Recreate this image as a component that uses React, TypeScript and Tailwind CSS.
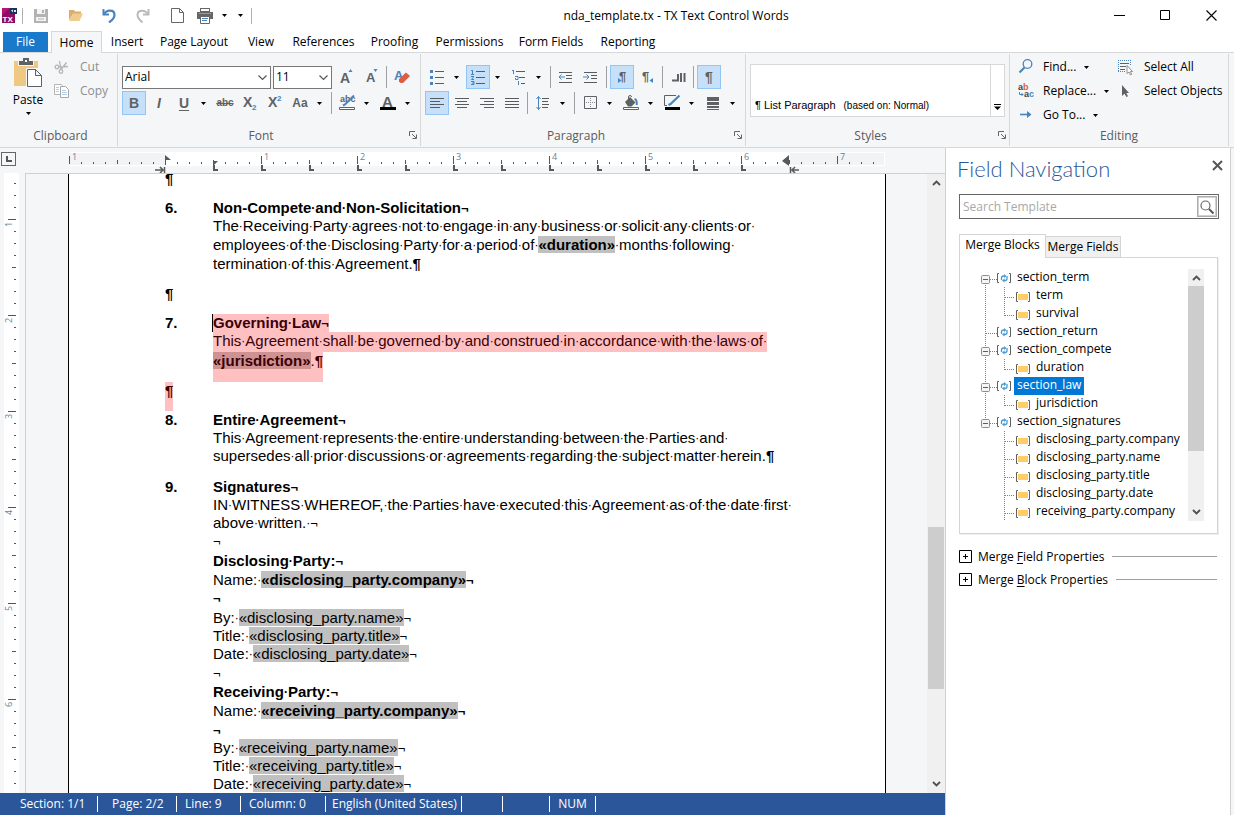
import React from "react";

type Kids = { children?: React.ReactNode };

/* ---------- small shared pieces ---------- */

function Caret() {
  return (
    <svg width="5" height="3" viewBox="0 0 5 3" className="shrink-0" aria-hidden="true">
      <path d="M0 0h5L2.5 3z" fill="#000" />
    </svg>
  );
}

function Icon({ children, size = 24 }: Kids & { size?: number }) {
  return (
    <svg width={size} height={size} viewBox={`0 0 ${size} ${size}`} fill="none" className="shrink-0" aria-hidden="true">
      {children}
    </svg>
  );
}

function Tool({ label, on = false, children }: Kids & { label: string; on?: boolean }) {
  return (
    <button
      aria-label={label}
      className={
        on
          ? "flex h-6 w-6 shrink-0 items-center justify-center bg-[#c5e0f8] outline outline-1 -outline-offset-1 outline-[#92c5f3]"
          : "flex h-6 w-6 shrink-0 items-center justify-center"
      }
    >
      {children}
    </button>
  );
}

function Split({ label, on = false, children }: Kids & { label: string; on?: boolean }) {
  return (
    <div className="mr-0.5 flex shrink-0">
      <Tool label={label} on={on}>
        {children}
      </Tool>
      <button aria-label={`${label} options`} className="flex h-6 w-3.5 items-center justify-center">
        <Caret />
      </button>
    </div>
  );
}

function Sep() {
  return <div className="mx-0.5 h-[22px] w-px shrink-0 bg-[#a0a0a0]" />;
}

function Lines({ rows, color = "#595c5f" }: { rows: number[][]; color?: string }) {
  return (
    <>
      {rows.map(([x, y, w]) => (
        <rect key={`${x}-${y}`} x={x} y={y} width={w} height="1" fill={color} />
      ))}
    </>
  );
}

function Launcher({ label }: { label: string }) {
  return (
    <button aria-label={label} className="absolute right-[3px] bottom-[7px]">
      <svg width="8" height="8" viewBox="0 0 8 8" fill="none" aria-hidden="true">
        <path d="M.5 5V.5H6M3 3l4 4M7.5 3.5v4h-4" stroke="#666" />
      </svg>
    </button>
  );
}

function Group({
  name,
  className,
  labelClass = "",
  launcher = false,
  children,
}: Kids & { name: string; className: string; labelClass?: string; launcher?: boolean }) {
  return (
    <section aria-label={name} className={`relative flex flex-col border-r border-[#d5d7d9] ${className}`}>
      <div className="flex-1">{children}</div>
      <div className={`h-[19px] text-center leading-[18px] text-[#5b5b5b] ${labelClass}`}>{name}</div>
      {launcher && <Launcher label={`${name} settings`} />}
    </section>
  );
}

/* ---------- title bar and tabs ---------- */

function TitleBar() {
  return (
    <header className="flex h-[31px] shrink-0 items-center">
      <div className="flex w-[252px] shrink-0 items-center">
        <svg width="15" height="15" viewBox="0 0 15 15" className="ml-0.5 shrink-0" aria-hidden="true">
          <path d="M0 0h8v6h5v9H0z" fill="#b5127a" />
          <path d="M0 7l8-7v6h5v9H0z" fill="#8c0f60" />
          <path d="M8 0h7v6H8z" fill="#16325c" />
          <path d="M9 2.500l2-1v3zM12 2h2v2h-2z" fill="#dfe8f2" />
          <text x="0.500" y="13.500" fontSize="8" fontWeight="700" fontFamily="Liberation Sans" fill="#fff">TX</text>
        </svg>
        <div className="ml-[5px] h-4 w-px bg-[#b0b0b0]" />
        <button aria-label="Save" className="ml-[11px]">
          <Icon size={14}>
            <path d="M0 0h14v14H0z" fill="#b0b2b4" />
            <path d="M3 0h8v5H3zM2 8h10v4H2z" fill="#f4f4f4" />
            <path d="M8 1h2v3H8zM4 9.500h6v1H4z" fill="#b0b2b4" />
          </Icon>
        </button>
        <button aria-label="Open" className="ml-5">
          <Icon size={15}>
            <path d="M1 2h5l1 1.500h6V6H5l-4 6z" fill="#d9ae6b" />
            <path d="M5 5.500h10L11.500 13H1z" fill="#f0cb8d" />
          </Icon>
        </button>
        <button aria-label="Undo" className="ml-[19px]">
          <Icon size={14}>
            <path d="M1.500 0v5.500H7" stroke="#4a84bd" strokeWidth="2" />
            <path d="M2 5.500C4 .5 12.500 0 12.500 6c0 3-2 5-5.500 7.500" stroke="#4a84bd" strokeWidth="2.200" />
          </Icon>
        </button>
        <button aria-label="Redo" className="ml-5">
          <Icon size={14}>
            <path d="M12.500 0v5.500H7" stroke="#b9bbbd" strokeWidth="2" />
            <path d="M12 5.500C10 .5 1.500 0 1.500 6c0 3 2 5 5 7.500" stroke="#b9bbbd" strokeWidth="2" />
          </Icon>
        </button>
        <button aria-label="New" className="ml-5">
          <Icon size={15}>
            <path d="M1.500.5h8l4 4v10h-12zM9.500.5v4h4" stroke="#666" fill="#fff" />
          </Icon>
        </button>
        <button aria-label="Print" className="ml-3">
          <Icon size={16}>
            <path d="M3 0h10v4H3z" fill="#666" />
            <path d="M4 1h8v2H4z" fill="#fff" />
            <path d="M0 4h16v7H0z" fill="#666" />
            <path d="M2 5h12v1H2z" fill="#9a9c9e" />
            <path d="M3.500 8.500h9v7h-9z" fill="#fff" stroke="#666" />
            <path d="M5 10.500h6M5 12.500h5" stroke="#4a84bd" />
          </Icon>
        </button>
        <button aria-label="Print options" className="ml-[9px]"><Caret /></button>
        <button aria-label="Customize toolbar" className="ml-[11px]"><Caret /></button>
        <div className="ml-2 h-4 w-px bg-[#b0b0b0]" />
      </div>
      <h1 className="flex-1 pl-1 text-center">nda_template.tx - TX Text Control Words</h1>
      <div className="flex">
        <button aria-label="Minimize" className="flex w-[46px] justify-center">
          <Icon size={11}><path d="M0 5.500h11" stroke="#000" /></Icon>
        </button>
        <button aria-label="Maximize" className="flex w-[46px] justify-center">
          <Icon size={11}><path d="M.5.5h9v9H.5z" stroke="#000" /></Icon>
        </button>
        <button aria-label="Close" className="flex w-[46px] justify-center">
          <Icon size={11}><path d="M.5.5l10 10M10.500.5l-10 10" stroke="#000" strokeWidth="1.100" /></Icon>
        </button>
      </div>
    </header>
  );
}

const tabs: [string, string][] = [
  ["Insert", "w-[50px]"],
  ["Page Layout", "w-[84px]"],
  ["View", "w-[50px]"],
  ["References", "w-[75px]"],
  ["Proofing", "w-[67px]"],
  ["Permissions", "w-[83px]"],
  ["Form Fields", "w-[80px]"],
  ["Reporting", "w-[74px]"],
];

function Tabs() {
  return (
    <nav className="relative z-10 -mb-px flex h-[22px] shrink-0 pl-[3px]">
      <button className="mt-px h-5 w-[45px] bg-[#1979ca] leading-5 text-white">File</button>
      <button className="ml-[3px] h-[22px] w-[51px] border border-b-0 border-[#d5d7d9] bg-[#f4f6f8] leading-[22px]">Home</button>
      {tabs.map(([name, width]) => (
        <button key={name} className={`${width} h-[22px] leading-[22px] whitespace-nowrap`}>{name}</button>
      ))}
    </nav>
  );
}

/* ---------- ribbon ---------- */

function Combo({ label, value, className }: { label: string; value: string; className: string }) {
  return (
    <div className={`relative h-[23px] shrink-0 ${className}`}>
      <select aria-label={label} defaultValue={value} className="h-full w-full appearance-none border border-[#777] bg-white pb-px pl-[2px]">
        <option>{value}</option>
      </select>
      <svg width="9" height="6" viewBox="0 0 9 6" fill="none" className="pointer-events-none absolute top-[9px] right-[4px]" aria-hidden="true">
        <path d="M.5.5l4 4 4-4" stroke="#555" strokeWidth="1.200" />
      </svg>
    </div>
  );
}

const glyph = "font-['Liberation_Sans'] font-bold text-[#5f6265]";

function ClipboardGroup() {
  return (
    <Group name="Clipboard" className="w-[118px] shrink-0 pl-1">
      <div className="flex">
        <button className="ml-2 flex w-8 flex-col items-center pt-1">
          <svg width="28" height="30" viewBox="0 0 28 30" fill="none" aria-hidden="true">
            <path d="M0 3h24v25H0z" fill="#efc982" />
            <path d="M4 1h16v7H4z" fill="#f4f6f8" />
            <path d="M5 3h4V0h6v3h4v4H5z" fill="#5f6265" />
            <path d="M11 2h2v2h-2z" fill="#f4f6f8" />
            <path d="M12 10h16v20H12z" fill="#f4f6f8" />
            <path d="M13.500 11.500h8l6 6v11h-14zM21.500 11.500v6h6" stroke="#5f6265" fill="#fff" />
          </svg>
          <span className="mt-[3px] leading-[18px]">Paste</span>
          <span className="mt-[3px]"><Caret /></span>
        </button>
        <div className="flex flex-col text-[#8d8f91]">
          <button className="mt-px ml-2.5 flex h-6 items-center gap-2.5">
            <Icon size={16}>
              <g stroke="#b3b5b7" strokeWidth="1.300">
                <circle cx="3" cy="8" r="1.800" />
                <circle cx="7" cy="12.500" r="1.800" />
                <path d="M5 8l9-.5M7 10.500L5.500 2M7 10.500l5.500-7" />
              </g>
            </Icon>
            Cut
          </button>
          <button className="ml-2.5 flex h-6 items-center gap-2.5">
            <Icon size={16}>
              <path d="M.5 1.500h7l1 1v9h-8z" stroke="#b3b5b7" fill="#fff" />
              <path d="M6.500 3.500h5l3 3v8h-8z" stroke="#a6a8aa" fill="#fff" />
              <path d="M2 4.500h3M2 6.500h3M2 8.500h3M8 7.500h4M8 9.500h5M8 11.500h5" stroke="#b5cbe0" />
            </Icon>
            Copy
          </button>
        </div>
      </div>
    </Group>
  );
}

function FontGroup() {
  return (
    <Group name="Font" launcher className="w-[303px] shrink-0 pr-5 pl-1">
      <div className="flex flex-col gap-0.5 pt-[11px]">
        <div className="flex items-center gap-px">
          <Combo label="Font name" value="Arial" className="mr-px w-[149px]" />
          <Combo label="Font size" value="11" className="mr-px w-[59px]" />
          <Tool label="Grow font">
            <Icon><text x="6" y="18" fontSize="14" fontWeight="700" fontFamily="Liberation Sans" fill="#5f6265">A</text><path d="M14.500 7h4l-2-3z" fill="#4a84bd" /></Icon>
          </Tool>
          <Tool label="Shrink font">
            <Icon><text x="7" y="17" fontSize="13" fontWeight="700" fontFamily="Liberation Sans" fill="#5f6265">A</text><path d="M14.500 4h4l-2 3z" fill="#4a84bd" /></Icon>
          </Tool>
          <Sep />
          <Tool label="Clear formatting">
            <Icon><text x="4" y="15" fontSize="13" fontWeight="700" fontFamily="Liberation Sans" fill="#4a84bd">A</text><path d="M16 7.500l4 3.500-7 7h-2.500L9 16.500V14z" fill="#dd5f43" /></Icon>
          </Tool>
        </div>
        <div className="flex items-center gap-px">
          <Tool label="Bold" on><span className={`${glyph} text-[14px]`}>B</span></Tool>
          <Tool label="Italic"><span className={`${glyph} text-[14px] italic`}>I</span></Tool>
          <Split label="Underline"><span className={`${glyph} text-[14px] underline underline-offset-2`}>U</span></Split>
          <Tool label="Strikethrough"><span className={`${glyph} text-[10px] line-through`}>abc</span></Tool>
          <Tool label="Subscript">
            <Icon><text x="5" y="16" fontSize="14" fontWeight="700" fontFamily="Liberation Sans" fill="#5f6265">X</text><text x="14" y="19" fontSize="8" fontWeight="700" fontFamily="Liberation Sans" fill="#4a84bd">2</text></Icon>
          </Tool>
          <Tool label="Superscript">
            <Icon><text x="5" y="16" fontSize="14" fontWeight="700" fontFamily="Liberation Sans" fill="#5f6265">X</text><text x="14" y="10" fontSize="8" fontWeight="700" fontFamily="Liberation Sans" fill="#4a84bd">2</text></Icon>
          </Tool>
          <Split label="Change case"><span className={`${glyph} text-[12px]`}>Aa</span></Split>
          <Sep />
          <Split label="Highlight">
            <Icon>
              <text x="5" y="11" fontSize="9" fontFamily="Liberation Sans" fill="#5f6265" fontWeight="700">abc</text>
              <path d="M19 4.500L10 13.500l-2 1" stroke="#4a84bd" strokeWidth="2" />
              <path d="M4.500 16.500h15v2h-15z" stroke="#5f6265" fill="#fff" />
            </Icon>
          </Split>
          <Split label="Font color">
            <Icon><text x="6" y="16" fontSize="15" fontWeight="700" fontFamily="Liberation Sans" fill="#5f6265">A</text><path d="M4 16h16v3H4z" fill="#000" /></Icon>
          </Split>
        </div>
      </div>
    </Group>
  );
}

function ParagraphGroup() {
  return (
    <Group name="Paragraph" launcher className="w-[325px] shrink-0 pr-[18px] pl-1">
      <div className="flex flex-col gap-0.5 pt-[11px]">
        <div className="flex items-center gap-px">
          <Split label="Bullets">
            <Icon><path d="M5 5h3v3H5zM5 11h3v3H5zM5 17h3v3H5z" fill="#4a84bd" /><Lines rows={[[10, 6, 9], [10, 12, 9], [10, 18, 9]]} /></Icon>
          </Split>
          <Split label="Numbering" on>
            <Icon><path d="M5 5.500h2M6.500 5v4M5 9.500h3M5 11.500h3M7.500 12l-2 2.500H8M5 16.500h3v3H5M6 18h2" stroke="#4a84bd" /><Lines rows={[[10, 6, 9], [10, 12, 9], [10, 18, 9]]} /></Icon>
          </Split>
          <Split label="Multilevel list">
            <Icon><path d="M6.500 5v4M5 5.500h1M8 11.500h3v3H8.500v-1.500M11.500 16v4M11 16.500h1" stroke="#4a84bd" /><Lines rows={[[9, 6, 9], [12, 12, 6], [14, 18, 4]]} /></Icon>
          </Split>
          <Sep />
          <Tool label="Decrease indent">
            <Icon><Lines rows={[[5, 7, 13], [12, 10, 6], [12, 13, 6], [5, 17, 13]]} /><path d="M5 12h6M7.500 9.500L5 12l2.500 2.500" stroke="#4a84bd" /></Icon>
          </Tool>
          <Tool label="Increase indent">
            <Icon><Lines rows={[[5, 7, 13], [12, 10, 6], [12, 13, 6], [5, 17, 13]]} /><path d="M4 12h6M7.500 9.500L10 12l-2.500 2.500" stroke="#4a84bd" /></Icon>
          </Tool>
          <Sep />
          <Tool label="Left to right" on>
            <Icon><text x="9" y="16" fontSize="13" fontWeight="700" fontFamily="Liberation Sans" fill="#5f6265">¶</text><path d="M8 13v5l3.500-2.500z" fill="#4a84bd" /></Icon>
          </Tool>
          <Tool label="Right to left">
            <Icon><text x="7" y="16" fontSize="13" fontWeight="700" fontFamily="Liberation Sans" fill="#5f6265">¶</text><path d="M18 13v5l-3.500-2.500z" fill="#4a84bd" /></Icon>
          </Tool>
          <Sep />
          <Tool label="Tabs">
            <Icon><path d="M12 9v6.500H6M15 8v9M18.500 8v9" stroke="#5f6265" strokeWidth="2" /></Icon>
          </Tool>
          <Sep />
          <Tool label="Show formatting marks" on>
            <Icon><text x="8" y="17" fontSize="14" fontWeight="700" fontFamily="Liberation Sans" fill="#5f6265">¶</text></Icon>
          </Tool>
        </div>
        <div className="flex items-center gap-px">
          <Tool label="Align left" on><Icon><Lines rows={[[5, 7, 14], [5, 10, 10], [5, 13, 14], [5, 16, 10]]} /></Icon></Tool>
          <Tool label="Center"><Icon><Lines rows={[[5, 7, 14], [7, 10, 10], [5, 13, 14], [7, 16, 10]]} /></Icon></Tool>
          <Tool label="Align right"><Icon><Lines rows={[[5, 7, 14], [9, 10, 10], [5, 13, 14], [9, 16, 10]]} /></Icon></Tool>
          <Tool label="Justify"><Icon><Lines rows={[[5, 7, 14], [5, 10, 14], [5, 13, 14], [5, 16, 14]]} /></Icon></Tool>
          <Sep />
          <Split label="Line spacing">
            <Icon><path d="M7.500 5.500v13M5.500 8l2-2.500 2 2.500M5.500 16l2 2.500 2-2.500" stroke="#4a84bd" /><Lines rows={[[11, 7, 7], [11, 10, 6], [11, 13, 7], [11, 16, 6]]} /></Icon>
          </Split>
          <Sep />
          <Split label="Borders">
            <Icon><path d="M6.500 5.500h12v12h-12z" stroke="#5f6265" /><path d="M12.500 7v10M8 11.500h10" stroke="#8a8c8e" strokeDasharray="1 1" /></Icon>
          </Split>
          <Split label="Shading">
            <Icon>
              <path d="M6 11l5-5 5.500 5.500-4 4H9z" fill="#5f6265" />
              <path d="M9.500 9V6a1.500 1.500 0 013 0" stroke="#5f6265" />
              <path d="M15.500 8c2 .5 2.500 3 2.200 6" stroke="#4a84bd" strokeWidth="2" />
              <path d="M4.500 16.500h15v2h-15z" stroke="#5f6265" fill="#fff" />
            </Icon>
          </Split>
          <Split label="Border color">
            <Icon><path d="M16 4.500H4.500v10H7" stroke="#5f6265" /><path d="M19.500 4.500L10.500 13l-2 1" stroke="#4a84bd" strokeWidth="2.200" /><path d="M5 16h15v3H5z" fill="#000" /></Icon>
          </Split>
          <Split label="Border width">
            <Icon><path d="M6 6h12v4H6zM6 11h12v3H6zM6 15h12v2H6zM6 18h12v1H6z" fill="#5f6265" /></Icon>
          </Split>
        </div>
      </div>
    </Group>
  );
}

function StylesGroup() {
  return (
    <Group name="Styles" launcher className="min-w-0 flex-1 px-1" labelClass="pr-3.5">
      <div className="mt-2.5 flex h-[53px] border border-[#d5d7d9] bg-white">
        <div className="flex min-w-0 flex-1 items-end gap-2 pb-1 pl-1 leading-[13px] whitespace-nowrap">
          <span className="font-['Liberation_Sans'] text-[11px]">¶ List Paragraph</span>
          <span className="font-['Liberation_Sans'] text-[10px]">(based on: Normal)</span>
        </div>
        <button aria-label="More styles" className="flex w-3.5 items-end justify-center border-l border-[#d5d7d9] pb-1.5">
          <svg width="7" height="6" viewBox="0 0 7 6" aria-hidden="true"><path d="M0 0h7v1H0zM0 2.500h7L3.500 6z" /></svg>
        </button>
      </div>
    </Group>
  );
}

function EditingGroup() {
  const item = "flex h-6 items-center whitespace-nowrap";
  return (
    <Group name="Editing" className="w-[219px] shrink-0 pl-2" labelClass="pr-2">
      <div className="flex pt-px">
        <div className="w-[98px] shrink-0">
          <button className={item}>
            <Icon size={16}><circle cx="9.500" cy="5" r="4.300" stroke="#4a84bd" strokeWidth="1.300" /><path d="M6.500 8.500L1.500 13.500" stroke="#4a84bd" strokeWidth="2.200" /></Icon>
            <span className="mr-2 ml-[9px]">Find...</span><Caret />
          </button>
          <button className={item}>
            <Icon size={16}>
              <text x="0" y="7" fontSize="9" fontWeight="700" fontFamily="Liberation Sans" fill="#444">a<tspan fill="#dd5f43">b</tspan></text>
              <text x="6" y="14" fontSize="9" fontWeight="700" fontFamily="Liberation Sans" fill="#444">a<tspan fill="#4a84bd">c</tspan></text>
              <path d="M1.500 9v2.500H5M3.500 10L5 11.500 3.500 13" stroke="#4a84bd" />
            </Icon>
            <span className="mr-2 ml-[9px]">Replace...</span><Caret />
          </button>
          <button className={item}>
            <Icon size={16}><path d="M2 7.500h10" stroke="#4a84bd" strokeWidth="1.600" /><path d="M9 4l4.500 3.500L9 11z" fill="#4a84bd" /></Icon>
            <span className="mr-2 ml-[9px]">Go To...</span><Caret />
          </button>
        </div>
        <div>
          <button className={item}>
            <Icon size={17}>
              <path d="M2 1.500h13M2 12.500h7M2.500 1v12M14.500 1v5" stroke="#4a84bd" strokeDasharray="1 1" />
              <path d="M4 4.500h9M4 7.500h6M4 10.500h5" stroke="#5f6265" />
              <path d="M11 6.500v8l2-1.500 1.500 3 1-.5-1-3h2z" fill="#fff" stroke="#777" strokeWidth=".8" />
            </Icon>
            <span className="ml-[11px]">Select All</span>
          </button>
          <button className={item}>
            <Icon size={17}><path d="M6 2v11l2.500-2.300L10.500 14l1.500-.8-1.700-3.200H13z" fill="#5f6265" /></Icon>
            <span className="ml-[11px]">Select Objects</span>
          </button>
        </div>
      </div>
    </Group>
  );
}

function Ribbon() {
  return (
    <div className="flex h-24 shrink-0 border-y border-[#d5d7d9] bg-[#f4f6f8] py-px pr-[5px]">
      <ClipboardGroup />
      <FontGroup />
      <ParagraphGroup />
      <StylesGroup />
      <EditingGroup />
    </div>
  );
}

/* ---------- rulers ---------- */

function range(n: number) {
  return Array.from({ length: n }, (_, i) => i);
}

function HorizontalRuler() {
  return (
    <svg width="818" height="25" viewBox="0 0 818 25" className="mx-auto" aria-hidden="true">
      <rect x="1" y="4" width="816" height="14" fill="#fff" />
      <rect x="1" y="5" width="96" height="12" fill="#f1f3f5" />
      <rect x="722" y="5" width="94" height="12" fill="#f1f3f5" />
      {range(68).map((i) => {
        const x = 1 + i * 12;
        if (i % 8 === 0) return <rect key={i} x={x} y="8" width="1" height="8" fill="#555" />;
        return <rect key={i} x={x} y={i % 4 === 0 ? 12 : 14} width="1" height={i % 4 === 0 ? 4 : 2} fill="#555" />;
      })}
      {range(9).map((i) =>
        i === 1 ? null : (
          <text key={i} x={4 + i * 96} y="12" fontSize="9" fontFamily="Open Sans" fill="#6d7f93">
            {i === 0 ? 1 : i - 1}
          </text>
        )
      )}
      {range(12).map((i) => (
        <path key={i} d={`M${146 + i * 48} 17v5h4`} fill="none" stroke="#595959" strokeWidth="2" />
      ))}
      <path d="M97 7l6 5h-5v5h-1zM145 13h5l-4 4h-1z" fill="#595959" />
      <path d="M87 22h8M92 19l3 3-3 3M96.500 19v6" stroke="#595959" strokeWidth="1.500" fill="none" />
      <path d="M721 7v11l-7-5z" fill="#595959" />
      <path d="M724 22h7M727 19l-3 3 3 3M722.500 19v6" stroke="#595959" strokeWidth="1.500" fill="none" />
    </svg>
  );
}

function VerticalRuler() {
  return (
    <svg width="25" height="620" viewBox="0 0 25 620" aria-hidden="true">
      <rect x="4" y="0" width="15" height="620" fill="#fff" />
      {range(51).map((i) => {
        const y = 10 + i * 12;
        if (i % 8 === 3) return <rect key={i} x="8" y={y} width="8" height="1" fill="#555" />;
        return <rect key={i} x={i % 4 === 3 ? 12 : 14} y={y} width={i % 4 === 3 ? 4 : 2} height="1" fill="#555" />;
      })}
      {range(6).map((i) => (
        <text key={i} transform={`translate(12 ${54 + i * 96}) rotate(-90)`} fontSize="9" fontFamily="Open Sans" fill="#6d7f93">
          {i + 1}
        </text>
      ))}
    </svg>
  );
}

/* ---------- document ---------- */

function Marked({ children }: { children: string }) {
  const words = children.split(" ");
  return (
    <>
      {words.map((word, i) => (
        <React.Fragment key={i}>
          {i > 0 && <span className="align-[1px] text-[12px] leading-none">·</span>}
          {word}
        </React.Fragment>
      ))}
    </>
  );
}

function Break() {
  return <span className="text-[13px] leading-none">¬</span>;
}

function Pilcrow() {
  return <span className="font-bold">¶</span>;
}

function Field({ children }: { children: string }) {
  return <span className="bg-[#c0c0c0]">«{children}»</span>;
}

const H17 = "h-[17px]";
const H18 = "h-[18px]";
const H19 = "h-[19px]";
const H20 = "h-[20px]";

function Line({ h = H18, bold = false, children }: Kids & { h?: string; bold?: boolean }) {
  return <div className={`${h} ${bold ? "font-bold" : ""}`}>{children}</div>;
}

function Clause({ n, children }: Kids & { n: number }) {
  return (
    <div className="mb-3 flex">
      <div className="w-12 shrink-0 font-bold">{n}.</div>
      <div>{children}</div>
    </div>
  );
}

function Party({ title, id, first = false }: { title: string; id: string; first?: boolean }) {
  return (
    <>
      <Line bold h={H19}><Marked>{`${title} Party:`}</Marked><Break /></Line>
      <Line h={first ? H18 : H19}><Marked>{"Name: "}</Marked><b><Field>{`${id}.company`}</Field><Break /></b></Line>
      <Line bold h={first ? H20 : H18}><Break /></Line>
      <Line><Marked>{"By: "}</Marked><Field>{`${id}.name`}</Field><Break /></Line>
      <Line><Marked>{"Title: "}</Marked><Field>{`${id}.title`}</Field><Break /></Line>
      <Line h={H19}><Marked>{"Date: "}</Marked><Field>{`${id}.date`}</Field><Break /></Line>
    </>
  );
}

function Page() {
  return (
    <article className="mx-auto h-full w-[818px] overflow-hidden border-x border-black bg-white pl-24 font-['Liberation_Sans',Arial,sans-serif] text-[15px] leading-[18px] whitespace-nowrap text-black">
      <div className="-mt-1 mb-3 h-[17px]"><Pilcrow /></div>
      <Clause n={6}>
        <Line bold><Marked>Non-Compete and Non-Solicitation</Marked><Break /></Line>
        <Line h={H19}><Marked>{"The Receiving Party agrees not to engage in any business or solicit any clients or "}</Marked></Line>
        <Line h={H19}>
          <Marked>{"employees of the Disclosing Party for a period of "}</Marked>
          <b><Field>duration</Field></b>
          <Marked>{" months following "}</Marked>
        </Line>
        <Line><Marked>termination of this Agreement.</Marked><Pilcrow /></Line>
      </Clause>
      <div className={`${H17} mb-3`}><Pilcrow /></div>
      <div className="flex">
        <div className="w-12 shrink-0 font-bold">7.</div>
        <div className="text-[#3a0006]">
          <div className="h-[18px] w-max bg-[#ffc0c2] font-bold shadow-[-1px_0_0_#000]"><Marked>Governing Law</Marked><Break /></div>
          <div className="h-[20px] w-max bg-[#ffc0c2]">
            <Marked>{"This Agreement shall be governed by and construed in accordance with the laws of "}</Marked>
          </div>
          <div className="h-[30px] w-max bg-[#ffc0c2]">
            <b><span className="bg-[#cf9293]">«jurisdiction»</span></b>.<Pilcrow />
          </div>
        </div>
      </div>
      <div className="h-[29px] w-max bg-[#ffc0c2] text-[#3a0006]"><Pilcrow /></div>
      <Clause n={8}>
        <Line bold><Marked>Entire Agreement</Marked><Break /></Line>
        <Line><Marked>{"This Agreement represents the entire understanding between the Parties and "}</Marked></Line>
        <Line h={H19}><Marked>supersedes all prior discussions or agreements regarding the subject matter herein.</Marked><Pilcrow /></Line>
      </Clause>
      <Clause n={9}>
        <Line bold>Signatures<Break /></Line>
        <Line><Marked>{"IN WITNESS WHEREOF, the Parties have executed this Agreement as of the date first "}</Marked></Line>
        <Line><Marked>{"above written. "}</Marked><Break /></Line>
        <Line h={H20}><Break /></Line>
        <Party title="Disclosing" id="disclosing_party" first />
        <Line h={H19}><Break /></Line>
        <Party title="Receiving" id="receiving_party" />
      </Clause>
    </article>
  );
}

function Chevron({ up = false }: { up?: boolean }) {
  return (
    <svg width="9" height="6" viewBox="0 0 9 6" fill="none" className="shrink-0" aria-hidden="true">
      <path d={up ? "M1 5l3.500-3.500L8 5" : "M1 1l3.500 3.500L8 1"} stroke="#505050" strokeWidth="1.800" />
    </svg>
  );
}

function Editor() {
  return (
    <main className="flex min-w-0 flex-1 flex-col">
      <div className="flex h-[25px] shrink-0 pr-[18px]">
        <div className="w-[25px] shrink-0 pt-1 pl-px">
          <div className="flex h-[14px] w-[15px] items-center justify-center border border-[#666]">
            <Icon size={7}><path d="M2 0v5h5" stroke="#555" strokeWidth="2" /></Icon>
          </div>
        </div>
        <div className="min-w-0 flex-1 overflow-hidden pl-0.5"><HorizontalRuler /></div>
      </div>
      <div className="flex min-h-0 flex-1 overflow-hidden">
        <div className="w-[25px] shrink-0"><VerticalRuler /></div>
        <div className="min-w-0 flex-1 overflow-hidden border-t border-l border-[#d0d0d0] pl-px"><Page /></div>
        <div className="flex w-[18px] shrink-0 flex-col items-center border-t border-[#d0d0d0] bg-[#f0f0f0] py-1.5">
          <Chevron up />
          <div className="w-4 grow-[341]" />
          <div className="w-4 grow-[162] bg-[#cdcdcd]" />
          <div className="w-4 grow-[92]" />
          <Chevron />
        </div>
      </div>
      <footer className="flex h-[22px] shrink-0 items-center bg-[#2b579a] whitespace-nowrap text-white">
        <div className="w-[98px] border-r border-white pl-5">Section: 1/1</div>
        <div className="w-[79px] border-r border-white pl-3.5">Page: 2/2</div>
        <div className="w-16 border-r border-white pl-2">Line: 9</div>
        <div className="w-[85px] border-r border-white pl-2">Column: 0</div>
        <div className="w-[136px] border-r border-white pl-1.5">English (United States)</div>
        <div className="h-4 w-[41px] border-r border-white" />
        <div className="h-4 w-[47px] border-r border-white" />
        <div className="w-[46px] border-r border-white text-center">NUM</div>
      </footer>
    </main>
  );
}

/* ---------- field navigation ---------- */

type Node = { name: string; children?: string[]; selected?: boolean };

const tree: Node[] = [
  { name: "section_term", children: ["term", "survival"] },
  { name: "section_return" },
  { name: "section_compete", children: ["duration"] },
  { name: "section_law", children: ["jurisdiction"], selected: true },
  {
    name: "section_signatures",
    children: [
      "disclosing_party.company",
      "disclosing_party.name",
      "disclosing_party.title",
      "disclosing_party.date",
      "receiving_party.company",
    ],
  },
];

function BlockIcon({ open, first, last }: { open: boolean; first: boolean; last: boolean }) {
  return (
    <svg width="32" height="18" viewBox="0 0 32 18" fill="none" className="shrink-0" aria-hidden="true">
      {!first && <path d="M4.500 0v10" stroke="#808080" strokeDasharray="1 1" />}
      {!last && <path d="M4.500 10v8" stroke="#808080" strokeDasharray="1 1" />}
      <path d="M5 10.500h11" stroke="#808080" strokeDasharray="1 1" />
      {open && (
        <>
          <rect x=".5" y="6.500" width="8" height="8" rx="1" fill="#f5f5f5" stroke="#8c8c8c" />
          <path d="M2 10.500h5" stroke="#3f5fa8" />
        </>
      )}
      <path d="M18 4.500h-1.500v9H18M28 4.500h1.500v9H28" stroke="#606060" />
      <path d="M20.500 11V9a2 2 0 012-2h1M26 7v2.500a2 2 0 01-2 2h-1" stroke="#4a9bd0" strokeWidth="1.300" />
      <path d="M23 5l2.500 2L23 9zM23.500 9.500l-2.500 2 2.500 2z" fill="#4a9bd0" />
    </svg>
  );
}

function FieldIcon({ end, trunk }: { end: boolean; trunk: boolean }) {
  return (
    <svg width="51" height="18" viewBox="0 0 51 18" fill="none" className="shrink-0" aria-hidden="true">
      {trunk && <path d="M4.500 0v18" stroke="#808080" strokeDasharray="1 1" />}
      <path d={end ? "M23.500 0v11" : "M23.500 0v18"} stroke="#808080" strokeDasharray="1 1" />
      <path d="M24 10.500h10" stroke="#808080" strokeDasharray="1 1" />
      <path d="M37 5.500h-1.500v9H37M47 5.500h1.500v9H47" stroke="#606060" />
      <rect x="37" y="7" width="10" height="6" fill="#ffcc66" />
    </svg>
  );
}

function Tree() {
  return (
    <ul className="min-w-0 flex-1 overflow-hidden">
      {tree.map((node, i) => {
        const last = i === tree.length - 1;
        return (
          <li key={node.name}>
            <div className="flex h-[18px]">
              <BlockIcon open={!!node.children} first={i === 0} last={last} />
              <span className={node.selected ? "ml-px bg-[#0078d7] px-[3px] text-white" : "ml-px px-[3px]"}>{node.name}</span>
            </div>
            {node.children && (
              <ul>
                {node.children.map((child, j) => (
                  <li key={child} className="flex h-[18px]">
                    <FieldIcon end={!last && j === node.children!.length - 1} trunk={!last} />
                    <span className="ml-1">{child}</span>
                  </li>
                ))}
              </ul>
            )}
          </li>
        );
      })}
    </ul>
  );
}

function Expander({ before, access, after }: { before: string; access: string; after: string }) {
  return (
    <div className="flex h-[23px] items-center">
      <button className="flex items-center gap-1.5">
        <svg width="13" height="13" viewBox="0 0 13 13" fill="none" aria-hidden="true">
          <path d="M.5.5h12v12H.5zM4 6.500h5M6.500 4v5" stroke="#000" />
        </svg>
        <span>{before}<u className="underline-offset-2">{access}</u>{after}</span>
      </button>
      <div className="ml-2 h-px flex-1 bg-[#a0a0a0]" />
    </div>
  );
}

function FieldNavigation() {
  return (
    <aside className="mr-[3px] flex w-[286px] shrink-0 flex-col border-x border-[#d0d0d0] bg-white pr-[11px] pl-[13px]">
      <div className="-ml-0.5 flex h-[46px] items-start justify-between">
        <h2 className="pt-[3px] font-['Lato'] text-[22px] leading-9 font-light text-[#2b579a]">Field Navigation</h2>
        <button aria-label="Close panel" className="-mr-1 pt-3">
          <Icon size={11}><path d="M1 1l9 9M10 1l-9 9" stroke="#555" strokeWidth="2" /></Icon>
        </button>
      </div>
      <div className="flex h-[25px] w-full shrink-0 items-center border border-[#666] p-px">
        <input aria-label="Search Template" placeholder="Search Template" className="h-full min-w-0 flex-1 pb-px pl-0.5 outline-none placeholder:text-[#a8a8a8]" />
        <button aria-label="Search" className="flex h-[21px] w-5 items-center justify-center border-2 border-[#d0d0d0] outline outline-1 -outline-offset-1 outline-[#adadad]">
          <Icon size={16}><circle cx="6.500" cy="6.500" r="4.500" stroke="#666" strokeWidth="1.200" /><path d="M10 10l4.500 4.500" stroke="#555" strokeWidth="2" /></Icon>
        </button>
      </div>
      <div className="mt-[15px] flex h-[23px] shrink-0 items-end">
        <button className="relative z-10 -mb-px h-6 w-[87px] border border-b-0 border-[#d5d5d5] bg-white pb-1 leading-5 whitespace-nowrap">Merge Blocks</button>
        <button className="h-[21px] w-[75px] border border-b-0 border-l-0 border-[#d5d5d5] bg-[#f0f0f0] leading-5 whitespace-nowrap">Merge Fields</button>
      </div>
      <div className="mr-px flex shrink-0 border border-[#d5d5d5] pt-[11px] pr-[13px] pb-3 pl-[21px] shadow-[1px_1px_0_#eeeeee]">
        <Tree />
        <div className="flex w-4 shrink-0 flex-col items-center bg-[#f0f0f0] py-1.5">
          <Chevron up />
          <div className="mt-[5px] h-[165px] w-4 bg-[#cdcdcd]" />
          <div className="flex-1" />
          <Chevron />
        </div>
      </div>
      <div className="mt-[11px] pr-0.5">
        <Expander before="Merge " access="F" after="ield Properties" />
        <Expander before="Merge " access="B" after="lock Properties" />
      </div>
    </aside>
  );
}

export default function App() {
  return (
    <div className="flex h-screen flex-col overflow-hidden bg-white font-['Open_Sans','Noto_Sans',sans-serif] text-[12px] leading-4 text-black">
      <TitleBar />
      <Tabs />
      <Ribbon />
      <div className="flex min-h-0 flex-1 bg-[#f4f6f8]">
        <Editor />
        <FieldNavigation />
      </div>
    </div>
  );
}
